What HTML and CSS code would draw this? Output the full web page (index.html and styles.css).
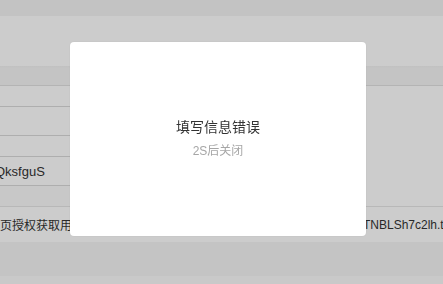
FILE: index.html
```html
<!DOCTYPE html>
<html lang="zh-CN">
<head>
<meta charset="utf-8">
<title>填写信息错误</title>
<link rel="stylesheet" href="styles.css">
</head>
<body>
<div class="page">
  <div class="topbar"></div>
  <div class="banner"></div>
  <div class="thead"></div>
  <div class="tbody">
    <div class="left-col">
      <div class="cell short"></div>
      <div class="cell tall"></div>
      <div class="cell short"></div>
      <div class="cell tall"><span>QksfguS</span></div>
      <div class="cell short plain"></div>
    </div>
    <div class="right-col"></div>
  </div>
  <div class="url-row">
    <span class="url-label">网页授权获取用户基本信息</span>
    <span class="url-value">TNBLSh7c2lh.txt</span>
  </div>
  <div class="gap"></div>
  <div class="footer"></div>
</div>
<div class="overlay">
  <div class="modal">
    <div class="modal-title">填写信息错误</div>
    <div class="modal-sub">2S后关闭</div>
  </div>
</div>
</body>
</html>
```

FILE: styles.css
```css
html, body {
  margin: 0;
  padding: 0;
  width: 443px;
  height: 284px;
  overflow: hidden;
  background: #ffffff;
  font-family: "Liberation Sans", "Noto Sans CJK SC", sans-serif;
  color: #333333;
}

.page {
  display: flex;
  flex-direction: column;
  width: 443px;
}

.topbar {
  height: 16px;
  background: #f4f4f4;
}

.banner {
  height: 50px;
  background: #ffffff;
}

.thead {
  height: 19px;
  background: linear-gradient(#f2f2f2, #f6f6f6 3px, #f6f6f6);
  border-bottom: 1px solid #e2e2e2;
}

.tbody {
  display: grid;
  grid-template-columns: 140px 1fr;
  border-bottom: 1px solid #e6e6e6;
}

.left-col {
  display: flex;
  flex-direction: column;
  margin-left: -15px;
}

.cell {
  display: flex;
  align-items: center;
  padding-left: 10px;
  font-size: 13px;
  border-bottom: 1px solid #dadada;
  white-space: nowrap;
}

.cell.short { height: 20px; }
.cell.tall { height: 28px; }
.cell.plain { border-bottom: none; background: #fbfbfb; }

.right-col {
  background: #ffffff;
}

.url-row {
  display: grid;
  grid-template-columns: 375px auto;
  align-items: center;
  height: 35px;
  margin-left: -12px;
  font-size: 12px;
  white-space: nowrap;
  background: #ffffff;
}

.url-label,
.url-value {
  overflow: hidden;
}

.gap {
  height: 34px;
  background: #f5f5f5;
}

.footer {
  height: 20px;
  background: #fcfcfc;
}

.overlay {
  position: fixed;
  inset: 0;
  background: rgba(0, 0, 0, 0.2);
}

.modal {
  position: absolute;
  left: 70px;
  top: 42px;
  width: 296px;
  height: 194px;
  box-sizing: border-box;
  background: #ffffff;
  border-radius: 4px;
  box-shadow: 0 0 2px rgba(0, 0, 0, 0.08);
  display: flex;
  flex-direction: column;
  align-items: center;
  padding-top: 74px;
}

.modal-title {
  font-family: "Noto Sans CJK SC", sans-serif;
  font-size: 14px;
  line-height: 20px;
  color: #333333;
}

.modal-sub {
  margin-top: 7px;
  font-family: "Liberation Sans", "Noto Sans CJK SC", sans-serif;
  font-size: 12px;
  line-height: 16px;
  color: #a6a6a6;
}
```
